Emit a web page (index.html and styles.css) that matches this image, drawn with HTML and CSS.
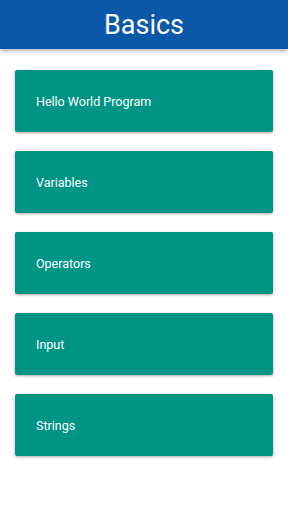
FILE: index.html
```html
<!DOCTYPE html>
<html lang="en">
<head>
    <title>Basics</title>
    <link rel="stylesheet" href="styles.css">
</head>
<body>
    <div class="toolbar">
        <h1>Basics</h1>
    </div>
    <div class="list">
        <div class="card">Hello World Program</div>
        <div class="card">Variables</div>
        <div class="card">Operators</div>
        <div class="card">Input</div>
        <div class="card">Strings</div>
    </div>
</body>
</html>
```

FILE: styles.css
```css
body {
    margin: 0;
    background-color: white;
    font-family: Roboto, "Noto Sans", sans-serif;
}

.toolbar {
    height: 49px;
    background-color: #0b58a8;
    display: flex;
    justify-content: center;
    align-items: center;
    box-shadow: 0 2px 4px rgba(0, 0, 0, 0.3);
}

h1 {
    margin: 0;
    color: white;
    font-size: 27px;
    font-weight: 400;
}

.list {
    display: flex;
    flex-direction: column;
    gap: 19px;
    padding: 21px 15px;
}

.card {
    height: 62px;
    background-color: #009485;
    color: white;
    font-size: 12.5px;
    display: flex;
    align-items: center;
    padding-left: 21px;
    border-radius: 2px;
    box-shadow: 0 1px 3px rgba(0, 0, 0, 0.35);
}
```
